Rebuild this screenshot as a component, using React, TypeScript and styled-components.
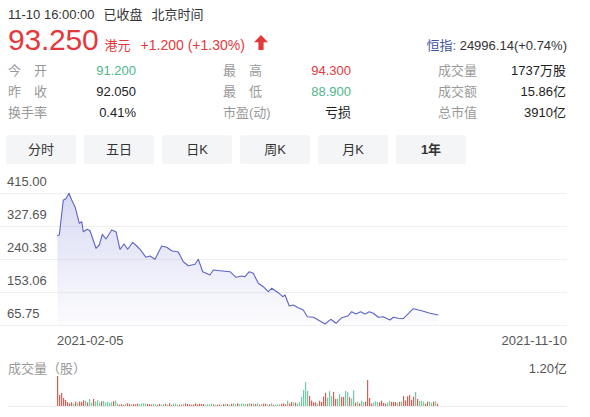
import React from "react";
import styled, { createGlobalStyle } from "styled-components";

const RED = "#e4393c";
const GREEN = "#4fb68a";
const LINE = "#5d63c9";

const GlobalStyle = createGlobalStyle`
  html, body { margin: 0; padding: 0; background: #fff; }
  body {
    font-family: "Liberation Sans", "Noto Sans CJK SC", sans-serif;
    color: #333;
  }
`;

// price line, page coords (x, y)
const pricePts: [number, number][] = [
  [57.3, 235.7], [59.3, 235], [63.3, 200], [65.7, 199], [69, 193.3], [71.7, 200],
  [75, 206.7], [79.3, 223.3], [81.7, 221.7], [83.3, 231.7], [87.3, 229.3], [90, 230.7],
  [96, 248.3], [99.3, 245], [102.3, 234.3], [106, 239], [111.7, 230], [116, 231.7],
  [120, 249.3], [124, 244], [127.7, 249.3], [132.7, 242.3], [136.7, 246], [140, 249.3],
  [146, 257.3], [150, 256], [155, 259.3], [161.7, 246], [166.7, 247.3], [171.7, 250.7],
  [178.3, 252], [183.3, 261.7], [188.3, 265.7], [195, 264.3], [198.3, 259.3], [202.7, 271.7],
  [210, 275], [213.3, 270], [220, 270.7], [230, 271.7], [236, 277.3], [241.7, 276],
  [245, 276.7], [249.3, 271.7], [253.3, 273.3], [258.3, 283.3], [263.3, 286.7], [268.3, 291.7],
  [271.7, 288.3], [278.3, 292.7], [282.7, 296.7], [285, 295], [289.3, 306], [293.3, 305],
  [298.3, 307.7], [303.3, 310], [307.3, 316.7], [313.3, 317.3], [318.3, 320], [325, 324],
  [330.7, 319.3], [336, 323.3], [341.7, 317.7], [348.3, 315.7], [351.7, 311.7], [356, 314],
  [360.7, 311.7], [365, 314], [369.3, 311.7], [373.3, 313.3], [378.3, 317.3], [383.3, 316.7],
  [390, 320], [393.3, 317.3], [398.3, 318.3], [403.3, 318.7], [413.3, 308.7], [421.7, 310.7],
  [430, 313.3], [438.3, 315],
];

const CHART_TOP = 170;
const gridYs = [23, 56, 89, 122, 155];
const yLabels = ["415.00", "327.69", "240.38", "153.06", "65.75"];

// volume bars
const rand = (() => {
  let s = 7;
  return () => {
    s = (s * 9301 + 49297) % 233280;
    return s / 233280;
  };
})();

const peaks: Record<number, [number, boolean]> = {
  0: [30, true], 1: [11, true], 2: [13, true], 3: [8, true], 4: [6, true],
  122: [9, false], 123: [16, false], 124: [24, false], 125: [15, false], 126: [10, true],
  155: [26, true], 156: [8, true],
};

const volumes = Array.from({ length: 191 }, (_, i) => {
  if (peaks[i]) return { h: peaks[i][0], up: peaks[i][1] };
  let base = 2;
  let redBias = 0.5;
  if (i < 13) { base = 4; redBias = 0.7; }
  else if (i < 30) { base = 5; redBias = 0.25; }
  else if (i < 115) { base = 2; redBias = 0.5; }
  else if (i < 133) { base = 4; redBias = 0.3; }
  else if (i < 149) { base = 11; redBias = 0.6; }
  else if (i < 173) { base = 4; redBias = 0.45; }
  else if (i < 181) { base = 10; redBias = 0.8; }
  else { base = 4; redBias = 0.35; }
  const h = Math.max(1, base * (0.55 + rand() * 0.9));
  return { h, up: rand() < redBias };
});

const stats = [
  [
    { label: "今开", value: "91.200", tone: "down" },
    { label: "最高", value: "94.300", tone: "up" },
    { label: "成交量", value: "1737万股" },
  ],
  [
    { label: "昨收", value: "92.050" },
    { label: "最低", value: "88.900", tone: "down" },
    { label: "成交额", value: "15.86亿" },
  ],
  [
    { label: "换手率", value: "0.41%" },
    { label: "市盈(动)", value: "亏损" },
    { label: "总市值", value: "3910亿" },
  ],
];

const tabs = ["分时", "五日", "日K", "周K", "月K", "1年"];

export default function App() {
  const linePath = pricePts
    .map(([x, y], i) => `${i ? "L" : "M"}${x} ${(y - CHART_TOP).toFixed(1)}`)
    .join(" ");
  const first = pricePts[0];
  const last = pricePts[pricePts.length - 1];
  const areaPath = `${linePath} L${last[0]} 155 L${first[0]} 155 Z`;

  return (
    <Page>
      <GlobalStyle />
      <TopLine>
        <span>11-10 16:00:00</span>
        <span>已收盘</span>
        <span>北京时间</span>
      </TopLine>

      <PriceRow>
        <Price>93.250</Price>
        <Currency>港元</Currency>
        <Change>+1.200 (+1.30%)</Change>
        <Arrow width="14" height="15" viewBox="0 0 14 15">
          <path d="M7 0 L14 7.2 L9.6 7.2 L9.6 15 L4.4 15 L4.4 7.2 L0 7.2 Z" fill={RED} />
        </Arrow>
        <Index>
          <IndexName>恒指:</IndexName> 24996.14(+0.74%)
        </Index>
      </PriceRow>

      <StatsGrid>
        {stats.flat().map((s) => (
          <Stat key={s.label}>
            <StatLabel>{s.label}</StatLabel>
            <StatValue $tone={s.tone}>{s.value}</StatValue>
          </Stat>
        ))}
      </StatsGrid>

      <Tabs>
        {tabs.map((t) => (
          <Tab key={t} $active={t === "1年"}>{t}</Tab>
        ))}
      </Tabs>

      <ChartSvg width="575" height="160" viewBox="0 0 575 160">
        <defs>
          <linearGradient id="area" x1="0" y1="23" x2="0" y2="155" gradientUnits="userSpaceOnUse">
            <stop offset="0" stopColor={LINE} stopOpacity="0.24" />
            <stop offset="1" stopColor={LINE} stopOpacity="0.02" />
          </linearGradient>
        </defs>
        {gridYs.map((y, i) => (
          <g key={y}>
            <line x1="0" x2="567" y1={y + 0.5} y2={y + 0.5} stroke="#f0f0f0" strokeWidth="1" />
            <text x="7" y={y - 7.5} fontSize="13" fill="#555" fontFamily="Liberation Sans, sans-serif">
              {yLabels[i]}
            </text>
          </g>
        ))}
        <path d={areaPath} fill="url(#area)" />
        <path d={linePath} fill="none" stroke={LINE} strokeWidth="1.1" strokeLinejoin="round" />
      </ChartSvg>

      <DateRow>
        <span>2021-02-05</span>
        <span>2021-11-10</span>
      </DateRow>

      <VolumeHead>
        <VolumeTitle>成交量（股）</VolumeTitle>
        <span>1.20亿</span>
      </VolumeHead>

      <VolumeSvg width="575" height="34" viewBox="0 0 575 34">
        <line x1="8" x2="567" y1="30.5" y2="30.5" stroke="#ececec" strokeWidth="1" />
        {volumes.map((v, i) => (
          <rect
            key={i}
            x={57 + i * 2}
            y={30 - v.h}
            width="1.2"
            height={v.h}
            fill={v.up ? "#e05a52" : "#6fcca5"}
          />
        ))}
      </VolumeSvg>
    </Page>
  );
}

const Page = styled.div`
  width: 559px;
  padding-left: 8px;
  font-size: 13px;
`;

const TopLine = styled.div`
  display: flex;
  gap: 9px;
  height: 30px;
  line-height: 30px;
  font-size: 13px;
  color: #333;
`;

const PriceRow = styled.div`
  display: flex;
  align-items: baseline;
  height: 30px;
  line-height: 20px;
`;

const Price = styled.span`
  font-size: 30px;
  color: ${RED};
  letter-spacing: -0.2px;
`;

const Currency = styled.span`
  margin-left: 6px;
  font-size: 13px;
  color: ${RED};
`;

const Change = styled.span`
  margin-left: 10px;
  font-size: 14px;
  color: ${RED};
`;

const Arrow = styled.svg`
  margin-left: 9px;
`;

const Index = styled.span`
  margin-left: auto;
  font-size: 13px;
  color: #333;
`;

const IndexName = styled.span`
  color: #3e56a6;
`;

const StatsGrid = styled.div`
  display: grid;
  grid-template-columns: repeat(3, 128px);
  column-gap: 87px;
`;

const Stat = styled.div`
  display: flex;
  height: 21px;
  line-height: 21px;
  font-size: 13px;
`;

const StatLabel = styled.span`
  width: 39px;
  color: #999;
  text-align: justify;
  text-align-last: justify;
  white-space: nowrap;
`;

const StatValue = styled.span<{ $tone?: string }>`
  flex: 1;
  text-align: right;
  color: ${(p) => (p.$tone === "up" ? RED : p.$tone === "down" ? GREEN : "#222")};
`;

const Tabs = styled.div`
  display: flex;
  gap: 8px;
  margin: 12px 0 0 -2px;
`;

const Tab = styled.div<{ $active?: boolean }>`
  width: 70px;
  height: 29px;
  line-height: 29px;
  text-align: center;
  border-radius: 3px;
  background: #f4f5f7;
  font-size: 13px;
  color: #333;
  font-weight: ${(p) => (p.$active ? 700 : 400)};
`;

const ChartSvg = styled.svg`
  display: block;
  margin: 6px 0 0 -8px;
`;

const DateRow = styled.div`
  display: flex;
  justify-content: space-between;
  padding-left: 49px;
  height: 22px;
  line-height: 22px;
  font-size: 13px;
  color: #555;
`;

const VolumeHead = styled.div`
  display: flex;
  justify-content: space-between;
  margin-top: 10px;
  height: 14px;
  line-height: 14px;
  font-size: 13px;
  color: #555;
`;

const VolumeTitle = styled.span`
  color: #999;
`;

const VolumeSvg = styled.svg`
  display: block;
  margin-left: -8px;
`;
